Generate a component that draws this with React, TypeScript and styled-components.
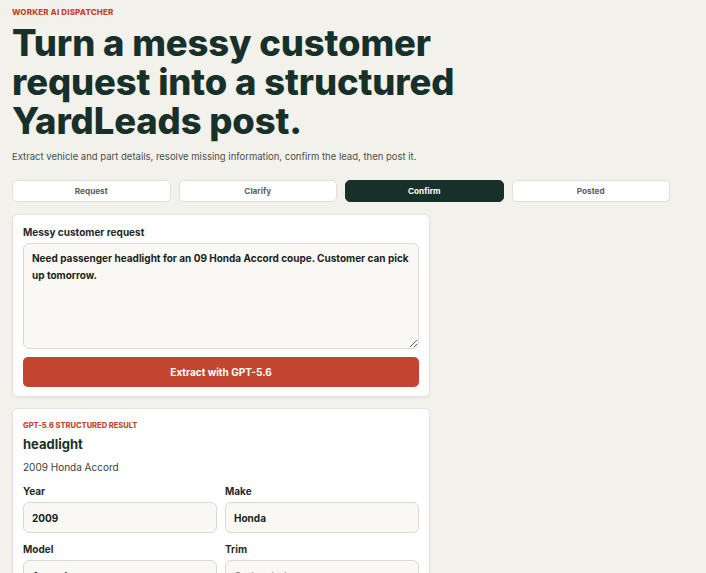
import { useState } from "react"
import styled, { createGlobalStyle } from "styled-components"

const GlobalStyle = createGlobalStyle`
  * { box-sizing: border-box; }
  body {
    margin: 0;
    background: #f3f1ec;
    font-family: Inter, "Noto Sans", sans-serif;
    color: #18302a;
  }
`

const Page = styled.main`
  padding: 7px 12px 0;
  max-width: 682px;
`

const Eyebrow = styled.div`
  font-size: 8px;
  font-weight: 800;
  letter-spacing: 0.02em;
  color: #c4452f;
  text-transform: uppercase;
`

const Title = styled.h1`
  margin: 7px 0 0;
  font-size: 36.4px;
  line-height: 39px;
  font-weight: 800;
  letter-spacing: -0.003em;
  color: #18302a;
  max-width: 470px;
`

const Lead = styled.p`
  margin: 10px 0 0;
  font-size: 9.5px;
  color: #4a4f4c;
`

const Steps = styled.nav`
  margin-top: 18px;
  display: grid;
  grid-template-columns: repeat(4, 1fr);
  gap: 8px;
  width: 658px;
`

const Step = styled.button<{ $active?: boolean }>`
  height: 22px;
  border-radius: 5px;
  border: 1px solid ${p => (p.$active ? "#18302a" : "#e2dfd8")};
  background: ${p => (p.$active ? "#18302a" : "#ffffff")};
  color: ${p => (p.$active ? "#ffffff" : "#5b605d")};
  font-family: inherit;
  font-size: 8.2px;
  font-weight: 700;
  cursor: pointer;
`

const Column = styled.div`
  margin-top: 12px;
  width: 418px;
  display: flex;
  flex-direction: column;
  gap: 11px;
`

const Card = styled.section`
  background: #ffffff;
  border: 1px solid #e6e3dc;
  border-radius: 6px;
  padding: 11px 10px 9px;
  box-shadow: 0 1px 3px rgba(30, 40, 35, 0.06);
`

const Label = styled.label`
  display: block;
  font-size: 10px;
  font-weight: 700;
  color: #1f2a26;
  margin-bottom: 5px;
`

const Textarea = styled.textarea`
  display: block;
  width: 100%;
  height: 106px;
  resize: vertical;
  border: 1px solid #dcd9d2;
  border-radius: 6px;
  background: #f9f8f5;
  padding: 6px 8px;
  font-family: inherit;
  font-size: 10px;
  font-weight: 700;
  line-height: 17px;
  color: #1a1f1d;
`

const Primary = styled.button`
  margin-top: 8px;
  width: 100%;
  height: 30px;
  border: none;
  border-radius: 5px;
  background: #c4452f;
  color: #ffffff;
  font-family: inherit;
  font-size: 10px;
  font-weight: 700;
`

const SmallCaps = styled.div`
  font-size: 7.5px;
  font-weight: 800;
  color: #c4452f;
  text-transform: uppercase;
  margin-top: 1px;
`

const PartName = styled.h2`
  margin: 6px 0 0;
  font-size: 13px;
  font-weight: 700;
  color: #18302a;
`

const Vehicle = styled.p`
  margin: 9px 0 0;
  font-size: 10px;
  color: #3b403d;
`

const Fields = styled.div`
  margin-top: 12px;
  display: grid;
  grid-template-columns: 1fr 1fr;
  column-gap: 8px;
  row-gap: 10px;
`

const Field = styled.div`
  display: flex;
  flex-direction: column;
`

const Input = styled.input`
  height: 31px;
  border: 1px solid #dcd9d2;
  border-radius: 6px;
  background: #f9f8f5;
  padding: 0 8px;
  font-family: inherit;
  font-size: 10px;
  font-weight: 700;
  color: #1a1f1d;
  &::placeholder { color: #8b8e8b; font-weight: 500; }
`

const steps = ["Request", "Clarify", "Confirm", "Posted"]

export default function App() {
  const [request, setRequest] = useState(
    "Need passenger headlight for an 09 Honda Accord coupe. Customer can pick up tomorrow."
  )
  return (
    <>
      <GlobalStyle />
      <Page>
        <Eyebrow>Worker AI dispatcher</Eyebrow>
        <Title>Turn a messy customer request into a structured YardLeads post.</Title>
        <Lead>Extract vehicle and part details, resolve missing information, confirm the lead, then post it.</Lead>
        <Steps>
          {steps.map(s => (
            <Step key={s} $active={s === "Confirm"}>{s}</Step>
          ))}
        </Steps>
        <Column>
          <Card>
            <Label>Messy customer request</Label>
            <Textarea value={request} onChange={e => setRequest(e.target.value)} />
            <Primary>Extract with GPT-5.6</Primary>
          </Card>
          <Card>
            <SmallCaps>GPT-5.6 structured result</SmallCaps>
            <PartName>headlight</PartName>
            <Vehicle>2009 Honda Accord</Vehicle>
            <Fields>
              <Field>
                <Label>Year</Label>
                <Input defaultValue="2009" />
              </Field>
              <Field>
                <Label>Make</Label>
                <Input defaultValue="Honda" />
              </Field>
              <Field>
                <Label>Model</Label>
                <Input defaultValue="Accord" />
              </Field>
              <Field>
                <Label>Trim</Label>
                <Input placeholder="Optional trim" />
              </Field>
            </Fields>
          </Card>
        </Column>
      </Page>
    </>
  )
}
